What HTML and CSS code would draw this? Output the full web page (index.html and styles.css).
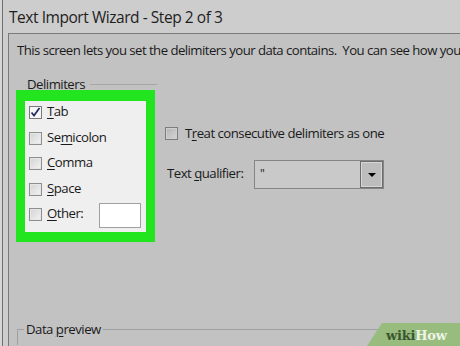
FILE: index.html
```html
<!DOCTYPE html>
<html>
<head>
<meta charset="utf-8">
<title>Text Import Wizard</title>
<link rel="stylesheet" href="styles.css">
</head>
<body>
<div class="window">
  <div class="titlebar">Text Import Wizard - Step 2 of 3</div>
  <div class="panel">
    <p class="intro">This screen lets you set the delimiters your data contains.&nbsp; You can see how you</p>
    <div class="main">
      <div class="delims">
        <div class="group-label"><span>Delimiters</span><i class="rule"></i></div>
        <div class="highlight">
          <div class="cb-row">
            <span class="cb checked"><svg width="11" height="11" viewBox="0 0 11 11"><polyline points="1.5,5.5 4,8.5 9.5,1" fill="none" stroke="#1f2a66" stroke-width="1.7"/></svg></span>
            <span class="lbl"><u>T</u>ab</span>
          </div>
          <div class="cb-row">
            <span class="cb"></span>
            <span class="lbl">Se<u>m</u>icolon</span>
          </div>
          <div class="cb-row">
            <span class="cb"></span>
            <span class="lbl"><u>C</u>omma</span>
          </div>
          <div class="cb-row">
            <span class="cb"></span>
            <span class="lbl"><u>S</u>pace</span>
          </div>
          <div class="cb-row">
            <span class="cb"></span>
            <span class="lbl"><u>O</u>ther:</span>
            <span class="other-input"></span>
          </div>
        </div>
      </div>
      <div class="options">
        <div class="treat">
          <span class="cb gray"></span>
          <span class="lbl">T<u>r</u>eat consecutive delimiters as one</span>
        </div>
        <div class="qual-row">
          <span class="qual-label">Text <u>q</u>ualifier:</span>
          <div class="select">
            <span class="val">"</span>
            <span class="btn"><i class="tri"></i></span>
          </div>
        </div>
      </div>
    </div>
    <div class="preview">
      <span class="legend">Data <u>p</u>review</span>
    </div>
  </div>
</div>
<div class="wikihow"><span class="w">wiki</span><span class="h">How</span></div>
</body>
</html>
```
FILE: styles.css
```css
* { box-sizing: border-box; margin: 0; padding: 0; }
html, body { width: 460px; height: 346px; overflow: hidden; }
body {
  background: #d6d6d6;
  font-family: "Open Sans", "Noto Sans", sans-serif;
  color: #1a1a1a;
  position: relative;
}
u { text-decoration: underline; text-underline-offset: 2px; text-decoration-thickness: 1px; }

.window {
  margin-left: 2px;
  height: 346px;
  overflow: hidden;
  border-left: 1px solid #6e6e6e;
  background: #cdcdcd;
  display: flex;
  flex-direction: column;
}
.titlebar {
  height: 33px;
  padding: 1px 0 0 6px;
  font-size: 15.5px;
  line-height: 32px;
  letter-spacing: -0.45px;
  color: #1e1e1e;
  white-space: nowrap;
}
.panel {
  margin-left: 5px;
  flex: 1;
  min-height: 0;
  border-top: 1px solid #7a7a7a;
  border-left: 1px solid #7a7a7a;
  background: #c2c2c2;
  font-size: 13.2px;
  letter-spacing: -0.5px;
}
.intro {
  padding: 7px 0 0 8px;
  height: 25px;
  line-height: 18px;
  white-space: nowrap;
  letter-spacing: -0.55px;
}
.main {
  display: flex;
  margin-top: 16px;
}
.delims {
  margin-left: 7px;
  width: 139px;
}
.group-label {
  height: 18px;
  line-height: 18px;
  display: flex;
  align-items: center;
  padding-left: 11px;
}
.rule {
  flex: 1;
  height: 1px;
  margin: 0 -2px 0 5px;
  background: #a6a6a6;
}
.highlight {
  margin-top: -3px;
  height: 152px;
  border-style: solid;
  border-color: #22e51f;
  border-width: 11px 9px 10px 9px;
  background: #efefef;
  padding-left: 4px;
}
.cb-row {
  height: 25.5px;
  display: flex;
  align-items: flex-start;
}
.cb {
  width: 13px;
  height: 13px;
  flex: none;
  margin-top: 5px;
  border: 1px solid #8e8e8e;
  background: linear-gradient(135deg, #d2d2d2, #f4f4f4);
  box-shadow: inset 0 0 0 1px #e6e6e6;
  display: flex;
  align-items: center;
  justify-content: center;
}
.cb.checked {
  background: #f6f6f6;
  box-shadow: none;
  border-color: #7a7a7a;
}
.cb.gray {
  margin-top: 0;
  border-color: #7c7c7c;
  background: linear-gradient(135deg, #b4b4b4, #d4d4d4);
  box-shadow: inset 0 0 0 1px #cfcfcf;
}
.lbl {
  margin-left: 5px;
  margin-top: 1px;
  line-height: 18px;
  white-space: nowrap;
}
.other-input {
  margin-left: auto;
  margin-right: 5px;
  width: 42px;
  height: 25px;
  background: #fff;
  border: 1px solid #a0a0a0;
}
.options {
  margin-left: 10px;
  padding-top: 52px;
}
.treat {
  display: flex;
  align-items: flex-start;
}
.treat .lbl {
  margin-left: 7px;
  margin-top: -3px;
}
.qual-row {
  display: flex;
  margin-top: 18px;
}
.qual-label {
  width: 89px;
  padding-left: 2px;
  margin-top: 4px;
  line-height: 18px;
  white-space: nowrap;
}
.select {
  width: 130px;
  height: 29px;
  border: 1px solid #858585;
  background: #c9c9c9;
  display: flex;
}
.val {
  flex: 1;
  padding: 4px 0 0 5px;
  line-height: 18px;
  font-size: 12px;
}
.btn {
  width: 23px;
  border: 1px solid #6c6c6c;
  background: #bdbdbd;
  box-shadow: inset 0 0 0 1px #d6d6d6;
  display: flex;
  align-items: center;
  justify-content: center;
}
.tri {
  width: 0;
  height: 0;
  border-left: 4px solid transparent;
  border-right: 4px solid transparent;
  border-top: 4px solid #000;
}
.preview {
  margin: 87px 0 0 8px;
  height: 16px;
  border-top: 1px solid #a0a0a0;
  border-left: 1px solid #a0a0a0;
}
.legend {
  display: inline-block;
  margin: -10px 0 0 6px;
  padding: 0 2px;
  line-height: 18px;
  background: #c2c2c2;
  vertical-align: top;
}
.wikihow {
  position: absolute;
  right: 0;
  bottom: 0;
  width: 93px;
  height: 23px;
  background: #98bc7d;
  clip-path: polygon(15px 0, 100% 0, 100% 100%, 0 100%);
  padding-left: 19px;
  font-family: "DejaVu Serif", serif;
  font-weight: bold;
  font-size: 13px;
  line-height: 23px;
  padding-top: 1px;
  letter-spacing: -0.2px;
}
.wikihow .w { color: #3b5631; }
.wikihow .h { color: #eef4e8; }
```
